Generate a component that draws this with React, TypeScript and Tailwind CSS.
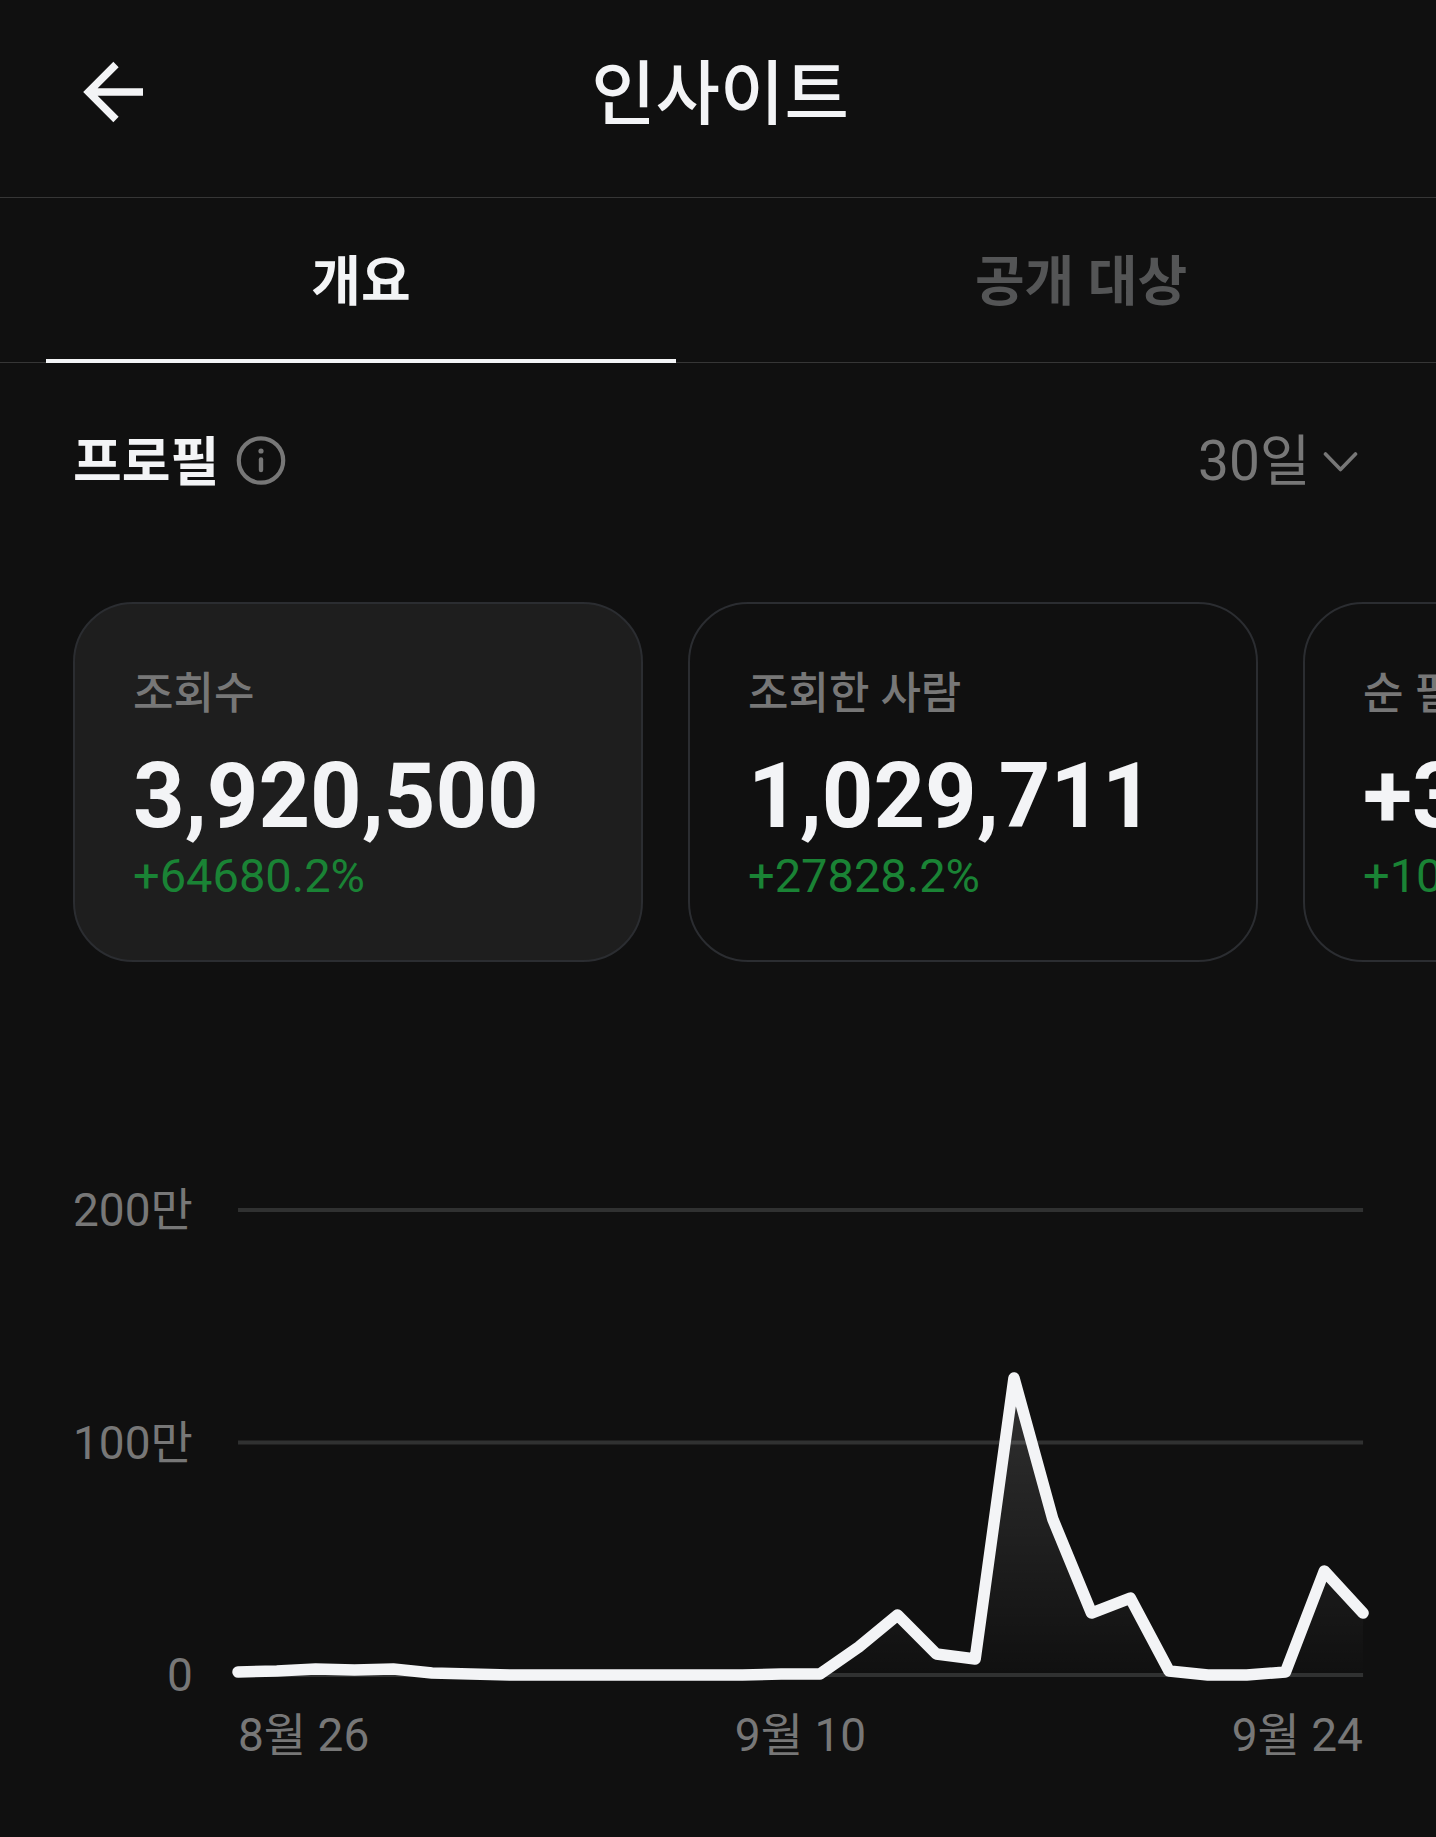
const tabs = ["개요", "공개 대상"];

const cards = [
  { label: "조회수", value: "3,920,500", change: "+64680.2%" },
  { label: "조회한 사람", value: "1,029,711", change: "+27828.2%" },
  { label: "순 필로워", value: "+3,104", change: "+10247.1%" },
];

const days = ["8월 26", "9월 10", "9월 24"];

// daily values in chart units, 0 is the top grid line and 465 the bottom one
const points = [
  462, 461, 459, 460, 459, 463, 464, 465, 465, 465, 465, 465, 465, 465, 464,
  464, 437, 405, 444, 449, 168, 309, 403, 388, 461, 465, 465, 462, 361, 403,
];

const CHART_W = 1125;
const CHART_H = 465;
const line = points
  .map((y, i) => `${((i * CHART_W) / (points.length - 1)).toFixed(1)},${y}`)
  .join(" ");

function Header() {
  return (
    <header className="grid grid-cols-[1fr_auto_1fr] items-center h-[198px] px-[73px] pb-3 border-b border-[#363636]">
      <a href="#" aria-label="뒤로" className="justify-self-start">
        <svg
          className="w-20 h-20"
          viewBox="0 0 80 80"
          fill="none"
          stroke="currentColor"
          strokeWidth="7.5"
        >
          <path d="M43 11.5 15.5 39l27.5 27.5M16 39h54" />
        </svg>
      </a>
      <h1 className="pt-1 pl-1 text-[70px] leading-[80px] font-medium">
        인사이트
      </h1>
    </header>
  );
}

function Tabs() {
  return (
    <nav className="flex gap-[90px] pl-[46px] pr-10 h-[165px] border-b border-[#363636]">
      {tabs.map((tab, i) => (
        <button
          key={tab}
          className={
            i === 0
              ? "flex-1 -mb-px pt-2 border-b-4 border-[#f3f4f6] text-[54px] leading-none font-bold"
              : "flex-1 -mb-px pt-2 border-b-4 border-transparent text-[54px] leading-none font-bold text-[#545556]"
          }
        >
          {tab}
        </button>
      ))}
    </nav>
  );
}

function ProfileBar() {
  return (
    <div className="flex items-center justify-between px-[73px] pt-[58px]">
      <div className="flex items-center gap-[17px]">
        <h2 className="pt-1 text-[53px] leading-[76px] font-bold">프로필</h2>
        <button aria-label="정보" className="text-[#777]">
          <svg className="w-[50px] h-[50px]" viewBox="0 0 50 50" fill="none">
            <circle cx="25" cy="24.5" r="22.2" stroke="currentColor" strokeWidth="4.2" />
            <circle cx="25" cy="15" r="2.6" fill="currentColor" />
            <path
              d="M25 23.5v10.5"
              stroke="currentColor"
              strokeWidth="4.4"
              strokeLinecap="round"
            />
          </svg>
        </button>
      </div>
      <div className="flex items-center gap-3 text-[#777]">
        <select
          aria-label="기간"
          className="appearance-none bg-transparent text-[55px] leading-[78px]"
        >
          <option>30일</option>
        </select>
        <svg
          className="w-10 h-10"
          viewBox="0 0 40 40"
          fill="none"
          stroke="currentColor"
          strokeWidth="3.6"
          strokeLinecap="round"
          strokeLinejoin="round"
        >
          <path d="M2.5 13 17.5 28.5 32.5 13" />
        </svg>
      </div>
    </div>
  );
}

function Cards() {
  return (
    <div className="flex gap-[45px] px-[73px] pt-[101px] overflow-x-auto [scrollbar-width:none]">
      {cards.map((card, i) => (
        <button
          key={card.label}
          className={
            i === 0
              ? "w-[570px] shrink-0 rounded-[60px] border-2 border-[#2b2d31] bg-[#1e1e1e] px-[58px] py-[60px] text-left"
              : "w-[570px] shrink-0 rounded-[60px] border-2 border-[#2b2d31] px-[58px] py-[60px] text-left"
          }
        >
          <p className="text-[44px] leading-[60px] font-medium text-[#777]">
            {card.label}
          </p>
          <p className="mt-[18px] text-[90px] leading-[110px] font-bold">
            {card.value}
          </p>
          <p className="text-[47px] leading-[48px] text-[#1a8335]">
            {card.change}
          </p>
        </button>
      ))}
    </div>
  );
}

function Chart() {
  return (
    <section className="px-[73px] pt-[218px] pb-16 text-[46px] leading-[60px] text-[#777]">
      <div className="flex gap-[45px]">
        <div className="flex flex-col justify-between items-end">
          <span>200만</span>
          <span>100만</span>
          <span>0</span>
        </div>
        <div className="flex-1 py-[30px]">
          <svg
            className="block w-full h-auto overflow-visible"
            viewBox={`0 0 ${CHART_W} ${CHART_H}`}
            fill="none"
          >
            <defs>
              <linearGradient
                id="area"
                gradientUnits="userSpaceOnUse"
                x1="0"
                y1="168"
                x2="0"
                y2="465"
              >
                <stop offset="0" stopColor="#fff" stopOpacity="0.14" />
                <stop offset="1" stopColor="#fff" stopOpacity="0" />
              </linearGradient>
            </defs>
            <path d="M0 0H1125M0 232.5H1125M0 465H1125" stroke="#303131" strokeWidth="4" />
            <polygon points={`0,465 ${line} ${CHART_W},465`} fill="url(#area)" />
            <polyline
              points={line}
              stroke="#f3f4f6"
              strokeWidth="11.5"
              strokeLinecap="round"
              strokeLinejoin="round"
            />
          </svg>
        </div>
      </div>
      <div className="flex justify-between pl-[165px]">
        {days.map((day) => (
          <span key={day}>{day}</span>
        ))}
      </div>
    </section>
  );
}

export default function App() {
  return (
    <main className="min-h-screen bg-[#101010] text-[#f3f4f6] font-[Roboto,'Noto_Sans_CJK_KR',sans-serif]">
      <Header />
      <Tabs />
      <ProfileBar />
      <Cards />
      <Chart />
    </main>
  );
}
